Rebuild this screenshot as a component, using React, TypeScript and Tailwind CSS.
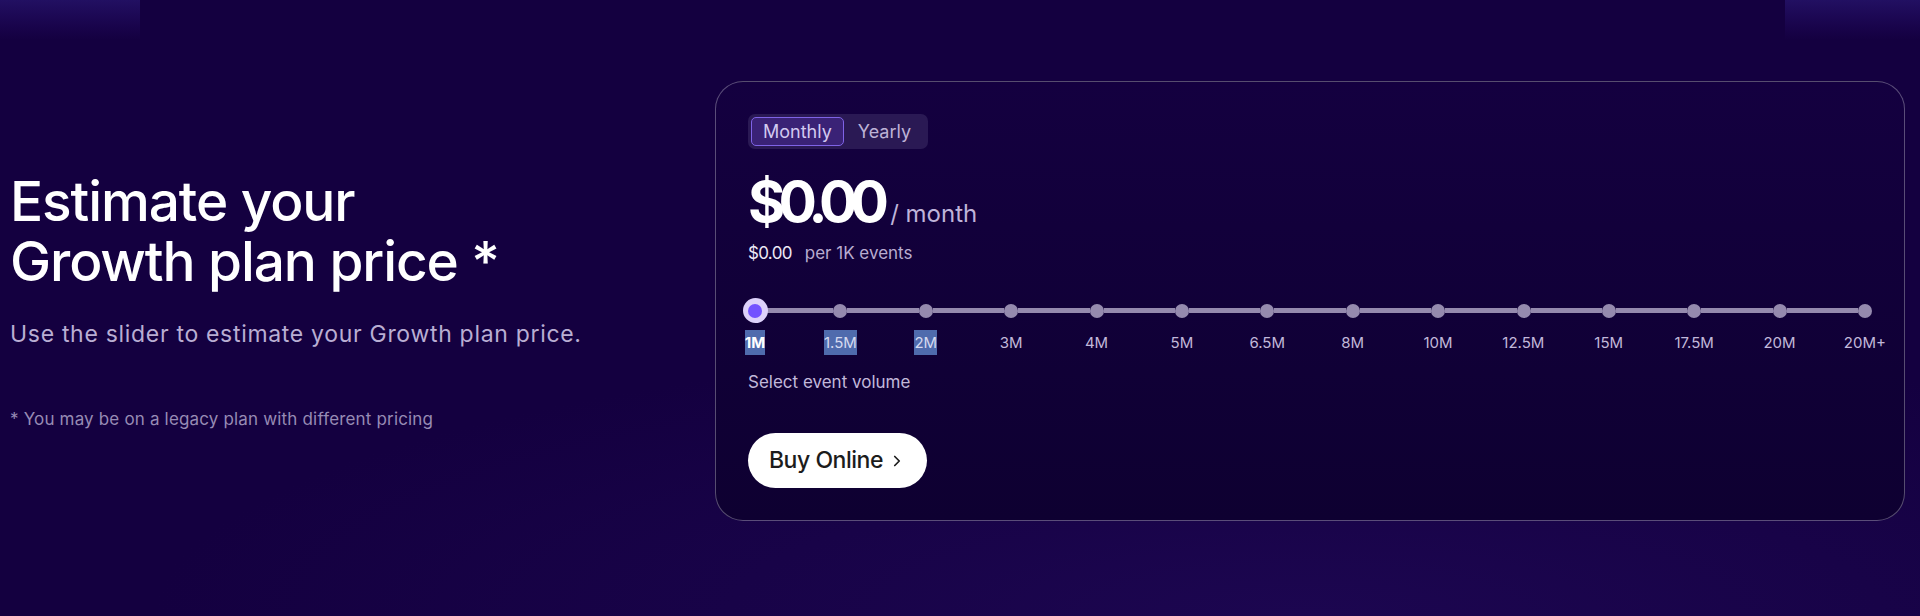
import { ChevronRight } from "lucide-react";

const volumes = ["1M", "1.5M", "2M", "3M", "4M", "5M", "6.5M", "8M", "10M", "12.5M", "15M", "17.5M", "20M", "20M+"];

function BillingToggle() {
  return (
    <div className="inline-flex h-[35px] items-center rounded-[7px] bg-[#2a1954] p-[3px]">
      <button className="h-[29px] rounded-[5px] border border-[#7f63e6] bg-[#3a2276] px-[11px] text-[18px] leading-none text-[#d2c9f0]">
        Monthly
      </button>
      <button className="h-[29px] px-[14px] text-[18px] leading-none text-[#bdb2d6]">Yearly</button>
    </div>
  );
}

function VolumeSlider() {
  return (
    <div className="flex flex-col">
      <div className="relative flex h-[25px] items-center">
        {volumes.map((v, i) => (
          <div key={v} className={i < volumes.length - 1 ? "flex flex-1 items-center" : "flex items-center"}>
            <span className="h-[14px] w-[14px] shrink-0 rounded-full bg-[#958aae]" />
            {i < volumes.length - 1 ? <span className="h-[5px] flex-1 bg-[#958aae]" /> : null}
          </div>
        ))}
        <span className="absolute left-[-5.5px] top-0 flex h-[25px] w-[25px] items-center justify-center rounded-full bg-[#ddd1fa]">
          <span className="h-[14px] w-[14px] rounded-full bg-[#7352ff]" />
        </span>
      </div>
      <div className="mt-[7px] flex justify-between">
        {volumes.map((v, i) => (
          <div key={v} className="flex w-[14px] justify-center">
            <span
              className={
                i === 0
                  ? "whitespace-nowrap bg-[#4f6bad] text-[15px] font-bold leading-[25px] text-white"
                  : i < 3
                    ? "whitespace-nowrap bg-[#4f6bad] text-[15px] leading-[25px] text-[#d6daf0]"
                    : "whitespace-nowrap text-[15px] leading-[25px] text-[#c2b8da]"
              }
            >
              {v}
            </span>
          </div>
        ))}
      </div>
      <p className="mt-[15px] text-[17px] leading-[24px] text-[#c2b8da]">Select event volume</p>
    </div>
  );
}

export default function App() {
  return (
    <div
      className="flex h-[616px] w-[1920px] flex-col overflow-hidden bg-[#140040] bg-[radial-gradient(ellipse_60%_45%_at_68%_100%,#1c0650_0%,#140040_100%)] text-white"
      style={{ fontFamily: "Inter, 'Noto Sans', sans-serif" }}
    >
      <div className="flex h-[40px] shrink-0 justify-between">
        <div className="h-full w-[140px] bg-gradient-to-b from-[#221062] to-[#140040]" />
        <div className="h-full w-[135px] bg-gradient-to-b from-[#221062] to-[#140040]" />
      </div>

      <div className="flex items-center pl-[10px] pr-[15px] pt-[41px]">
        <div className="flex w-[705px] shrink-0 flex-col">
          <h1 className="text-[55px] font-medium leading-[60px] tracking-[-0.02em] text-white">
            Estimate your
            <br />
            Growth plan price *
          </h1>
          <p className="mt-[28px] text-[23px] leading-[30px] tracking-[0.03em] text-[#b9aed3]">
            Use the slider to estimate your Growth plan price.
          </p>
          <p className="mt-[58px] text-[17px] leading-[24px] tracking-[0.01em] text-[#978bb4]">
            * You may be on a legacy plan with different pricing
          </p>
        </div>

        <div className="flex h-[440px] flex-1 flex-col rounded-[28px] border border-white/30 bg-gradient-to-b from-[#140040] to-[#0e0031] p-8">
          <div>
            <BillingToggle />
          </div>
          <div className="mt-[24px] flex items-baseline gap-[8px]">
            <span className="text-[57px] font-bold leading-none tracking-[-0.12em] text-white">$0.00</span>
            <span className="text-[24px] text-[#bfb3d9]">/ month</span>
          </div>
          <div className="mt-[9px] flex items-center gap-[13px] text-[17px] leading-[24px]">
            <span className="tracking-[-0.04em] text-[#ece8f6]">$0.00</span>
            <span className="text-[#b8acd0]">per 1K events</span>
          </div>
          <div className="mt-[33px]">
            <VolumeSlider />
          </div>
          <div className="mt-[39px]">
            <button className="flex h-[55px] w-[179px] items-center justify-center gap-[5px] rounded-full bg-white text-[23px] font-medium tracking-[-0.02em] text-[#1c1c1c]">
              Buy Online
              <ChevronRight className="h-[18px] w-[18px]" strokeWidth={2.25} />
            </button>
          </div>
        </div>
      </div>
    </div>
  );
}
